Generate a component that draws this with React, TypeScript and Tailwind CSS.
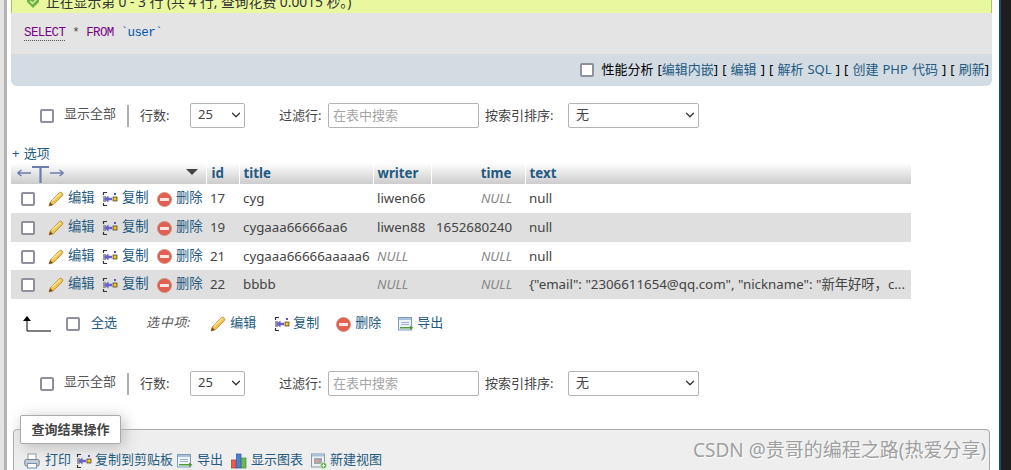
import { ChevronDown } from 'lucide-react'

const FONT = '"Noto Sans","Noto Sans CJK SC",sans-serif'

function PencilIcon() {
  return (
    <svg width="16" height="16" viewBox="0 0 16 16" className="shrink-0">
      <path d="M1 15 L2.5 10.5 L11.5 1.6 Q12.6 .8 13.8 1.7 L14.6 2.6 Q15.2 3.8 14.3 4.7 L5.5 13.6 Z" fill="#f2c44e" stroke="#b9812a" strokeWidth=".8" />
      <path d="M4 10 L12.5 2.5" stroke="#fbe6a0" strokeWidth="1.4" />
      <path d="M1 15 L2.2 11.2 L4.9 13.9 Z" fill="#7a4a1c" />
    </svg>
  )
}

function CopyIcon() {
  return (
    <svg width="16" height="16" viewBox="0 0 16 16" className="shrink-0">
      <path d="M5 1.5 H1.5 V4 M1.5 12 V14.5 H5" fill="none" stroke="#333" strokeWidth="1.2" />
      <rect x="1" y="5" width="3" height="6" fill="#999" />
      <path d="M2 8 L6.5 4.5 V6.7 H10 V9.3 H6.5 V11.5 Z" fill="#6a5fd0" />
      <rect x="11" y="6" width="4" height="4" fill="#f5c518" stroke="#333" strokeWidth=".7" />
      <rect x="12" y="2" width="2" height="2" fill="#5b50c0" />
    </svg>
  )
}

function DeleteIcon() {
  return (
    <svg width="15" height="15" viewBox="0 0 15 15" className="shrink-0">
      <circle cx="7.5" cy="7.5" r="7" fill="#e2604f" stroke="#c9897f" strokeWidth=".8" />
      <rect x="3" y="6" width="9" height="3" fill="#f7e6e2" />
    </svg>
  )
}

function ExportIcon() {
  return (
    <svg width="16" height="16" viewBox="0 0 16 16" className="shrink-0">
      <rect x=".5" y="1.5" width="13" height="12.5" fill="#eef3fa" stroke="#7f9db9" />
      <rect x="1" y="2" width="12" height="2" fill="#a8c0dc" />
      <path d="M3 6.5 H11 M3 8.5 H11" stroke="#9db3cc" />
      <path d="M2 11 H12 V9.5 L15.5 11.7 L12 14 V12.5 H2 Z" fill="#4e9a3c" />
    </svg>
  )
}

function PrintIcon() {
  return (
    <svg width="16" height="16" viewBox="0 0 16 16" className="shrink-0">
      <rect x="4" y="1" width="8" height="6" fill="#fff" stroke="#8a97a6" />
      <rect x=".8" y="6.5" width="14.4" height="6.5" rx="1.5" fill="#c5ccd4" stroke="#77828e" />
      <rect x="3.5" y="10.5" width="9" height="4.5" fill="#fff" stroke="#6f8fb5" />
    </svg>
  )
}

function ChartIcon() {
  return (
    <svg width="16" height="16" viewBox="0 0 16 16" className="shrink-0">
      <rect x=".5" y="7" width="4.5" height="8" fill="#e2604f" stroke="#b03a2c" strokeWidth=".7" />
      <rect x="5.5" y="1" width="4.5" height="14" fill="#4f7fd0" stroke="#2a55a0" strokeWidth=".7" />
      <rect x="10.5" y="5" width="4.5" height="10" fill="#6fb55a" stroke="#3e8a2e" strokeWidth=".7" />
    </svg>
  )
}

function NewViewIcon() {
  return (
    <svg width="16" height="16" viewBox="0 0 16 16" className="shrink-0">
      <rect x=".5" y="1" width="13" height="13" fill="#eef1f4" stroke="#8a9aa8" />
      <rect x="1" y="1.5" width="12" height="2" fill="#a8c0dc" />
      <rect x="3" y="5" width="8" height="6" fill="#9aa5b5" />
      <circle cx="6" cy="8" r="2" fill="#d9a088" />
      <circle cx="12.5" cy="12.5" r="3.2" fill="#5cb04a" stroke="#fff" strokeWidth=".6" />
      <path d="M10.8 12.5 H14.2 M12.5 10.8 V14.2" stroke="#fff" strokeWidth="1.1" />
    </svg>
  )
}

function SuccessIcon() {
  return (
    <svg width="12" height="12" viewBox="0 0 12 12" className="shrink-0 -mt-[10px]">
      <path d="M0 2 L6 0 L12 2 V6 L6 12 L0 6 Z" fill="#6db33f" />
      <path d="M3 5 L5.5 7.5 L9.5 3.5" fill="none" stroke="#d8f0b8" strokeWidth="1.4" />
    </svg>
  )
}

function Box() {
  return <input type="checkbox" className="block appearance-none shrink-0 w-[14px] h-[14px] border-2 border-[#8f8f9d] rounded-[2px] bg-white" />
}

function Dropdown({ value, width }: { value: string; width: string }) {
  return (
    <div className={`relative h-[25px] ${width}`}>
      <select className="appearance-none w-full h-full pl-[7px] pb-[2px] border border-[#b3b3b3] rounded-[2px] bg-white text-[#444] text-[13px]">
        <option>{value}</option>
      </select>
      <ChevronDown size={14} strokeWidth={2.2} className="absolute right-[2px] top-[5px] text-[#333] pointer-events-none" />
    </div>
  )
}

function Navigation() {
  return (
    <div className="flex items-center h-[25px] text-[13px] text-[#444]">
      <div className="ml-[29px]"><Box /></div>
      <span className="ml-[10px] w-[53px] -mt-[3px] text-[#555]">显示全部</span>
      <span className="ml-[10px] w-[2px] h-[22px] bg-[#b0b0b0]" />
      <span className="ml-[11px] w-[50px]">行数:</span>
      <Dropdown value="25" width="w-[55px]" />
      <span className="ml-[34px] w-[49px]">过滤行:</span>
      <input
        placeholder="在表中搜索"
        className="w-[151px] h-[25px] px-[4px] pb-[2px] border border-[#b3b3b3] rounded-[2px] bg-white text-[13px] placeholder:text-[#a5a5a5]"
      />
      <span className="ml-[6px] w-[83px]">按索引排序:</span>
      <Dropdown value="无" width="w-[131px]" />
    </div>
  )
}

function Action({ icon, label, gap = 'gap-[4px]', className = '' }: { icon: React.ReactNode; label: string; gap?: string; className?: string }) {
  return (
    <span className={`flex items-center ${gap} ${className} text-[#235a81]`}>
      {icon}
      <span className="-mt-[2px]">{label}</span>
    </span>
  )
}

const rows = [
  { id: 17, title: 'cyg', writer: 'liwen66', time: null, text: 'null', h: 'h-[29px]' },
  { id: 19, title: 'cygaaa66666aa6', writer: 'liwen88', time: '1652680240', text: 'null', h: 'h-[29px]' },
  { id: 21, title: 'cygaaa66666aaaaa6', writer: null, time: null, text: 'null', h: 'h-[28px]' },
  { id: 22, title: 'bbbb', writer: null, time: null, text: '{"email": "2306611654@qq.com", "nickname": "新年好呀，c...', h: 'h-[29px]' },
]

const headCell = 'border-l border-white font-bold text-[#235a81] bg-gradient-to-b from-white to-[#cccccc]'

function Null() {
  return <span className="italic text-[#888]">NULL</span>
}

function ResultTable() {
  return (
    <table className="table-fixed w-[900px] border-collapse text-[13.3px] text-[#444]">
      <colgroup>
        <col className="w-[195px]" />
        <col className="w-[33px]" />
        <col className="w-[134px]" />
        <col className="w-[58px]" />
        <col className="w-[94px]" />
        <col className="w-[386px]" />
      </colgroup>
      <thead>
        <tr className="h-[21px]">
          <th className="p-0 bg-gradient-to-b from-white to-[#cccccc]">
            <div className="flex items-center justify-between pl-[6px] pr-[8px]">
              <svg width="47" height="20" viewBox="0 0 47 20">
                <path d="M0.5 9 H14 M0.5 9 L4.5 6 M0.5 9 L4.5 12 M33 9 H46.5 M46.5 9 L42.5 6 M46.5 9 L42.5 12" fill="none" stroke="#6a7bb0" strokeWidth="1.4" />
                <path d="M15 3 H32 M23.5 3 V19" fill="none" stroke="#6a7bb0" strokeWidth="2.2" />
              </svg>
              <svg width="12" height="6" viewBox="0 0 12 6" className="-mt-[3px]">
                <path d="M0 0 H12 L6 6 Z" fill="#444" />
              </svg>
            </div>
          </th>
          <th className={`${headCell} pl-[5px] text-left`}>id</th>
          <th className={`${headCell} px-[4px] text-left`}>title</th>
          <th className={`${headCell} px-[4px] text-left`}>writer</th>
          <th className={`${headCell} pr-[13px] text-right`}>time</th>
          <th className={`${headCell} px-[4px] text-left`}>text</th>
        </tr>
      </thead>
      <tbody>
        {rows.map((r, i) => (
          <tr key={r.id} className={`${r.h} ${i % 2 === 1 ? 'bg-[#dfdfdf]' : 'bg-white'}`}>
            <td className="p-0">
              <div className="flex items-center pl-[10px] pt-[1px]">
                <Box />
                <div className="ml-[13px] w-[54px]"><Action icon={<PencilIcon />} label="编辑" /></div>
                <div className="w-[55px]"><Action icon={<CopyIcon />} label="复制" /></div>
                <Action icon={<DeleteIcon />} label="删除" />
              </div>
            </td>
            <td className="px-[4px] pt-[1px]">{r.id}</td>
            <td className="px-[4px] pt-[1px] whitespace-nowrap">{r.title}</td>
            <td className="px-[4px] pt-[1px]">{r.writer ?? <Null />}</td>
            <td className="pr-[13px] pt-[1px] text-right">{r.time ?? <Null />}</td>
            <td className="px-[4px] pt-[1px] whitespace-nowrap overflow-hidden">{r.text}</td>
          </tr>
        ))}
      </tbody>
    </table>
  )
}

export default function App() {
  return (
    <div className="relative flex w-[1011px] h-[470px] overflow-hidden bg-white" style={{ fontFamily: FONT }}>
      {/* left scroll gutter */}
      <div className="w-[4px] bg-[#e4e4e4]" />
      <div className="w-[3px] bg-[#b4b4b4]" />
      <div className="w-[985px] pl-[4px]">
        {/* message + query */}
        <div className="flex items-center gap-[7px] h-[13px] pl-[15px] bg-[#e9f89e] border-x border-[#a6c85a] overflow-hidden text-[13.8px] text-[#333]">
          <SuccessIcon />
          <span className="-mt-[8px] whitespace-nowrap">正在显示第 0 - 3 行 (共 4 行, 查询花费 0.0015 秒。)</span>
        </div>
        <div className="h-[41px] pl-[13px] pt-[12px] bg-[#e4e4e4] text-[12.5px] tracking-[-0.6px] leading-[16px]" style={{ fontFamily: '"Liberation Mono",monospace' }}>
          <span className="text-[#770088] border-b border-dotted border-[#555]">SELECT</span>
          <span className="text-[#444]"> * </span>
          <span className="text-[#770088]">FROM</span>
          <span className="text-[#0055aa]"> `user`</span>
        </div>
        <div className="flex items-center justify-end gap-[7px] h-[32px] pr-[3px] bg-[#d3dce3] rounded-b-[6px] text-[13px] text-[#000]">
          <Box />
          <span className="-mt-[1px] [word-spacing:0.7px]">
            性能分析 [<span className="text-[#235a81]">编辑内嵌</span>] [ <span className="text-[#235a81]">编辑</span> ] [ <span className="text-[#235a81]">解析 SQL</span> ] [ <span className="text-[#235a81]">创建 PHP 代码</span> ] [ <span className="text-[#235a81]">刷新</span>]
          </span>
        </div>

        <div className="mt-[17px]"><Navigation /></div>

        <div className="mt-[16px] ml-[1px] h-[19px] text-[13px] leading-[19px] text-[#235a81] [word-spacing:1px]">+ 选项</div>
        <ResultTable />

        {/* with selected */}
        <div className="flex items-center h-[48px] pt-[2px] text-[13px] text-[#444]">
          <svg width="28" height="16" viewBox="0 0 28 16" className="ml-[12px] shrink-0">
            <path d="M4 4 V15 H28" fill="none" stroke="#000" strokeWidth="1" />
            <path d="M0 5 L4 0 L8 5 Z" fill="#000" />
          </svg>
          <div className="ml-[15px]"><Box /></div>
          <span className="ml-[11px] text-[#235a81] -mt-[2px]">全选</span>
          <span className="ml-[29px] italic tracking-[0.7px] -mt-[2px] text-[#555]">选中项:</span>
          <div className="ml-[19px] w-[64px]"><Action icon={<PencilIcon />} label="编辑" /></div>
          <div className="w-[62px]"><Action icon={<CopyIcon />} label="复制" gap="gap-[3px]" /></div>
          <div className="w-[62px]"><Action icon={<DeleteIcon />} label="删除" /></div>
          <Action icon={<ExportIcon />} label="导出" gap="gap-[3px]" />
        </div>

        <div className="mt-[24px]"><Navigation /></div>

        {/* query results operations */}
        <fieldset className="mt-[19px] ml-[2px] w-[977px] h-[80px] border border-[#aaaaaa] rounded-t-[4px] bg-[#eeeeee] px-[10px]">
          <legend className="ml-[-4px] w-[101px] h-[29px] flex items-center justify-center bg-white border border-[#aaaaaa] rounded-[2px] shadow-[3px_3px_15px_#bbbbbb] text-[13px] font-bold text-[#444]">
            查询结果操作
          </legend>
          <div className="flex items-center mt-[8px] text-[13px] whitespace-nowrap">
            <Action icon={<PrintIcon />} label="打印" gap="gap-[5px]" />
            <Action icon={<CopyIcon />} label="复制到剪贴板" gap="gap-[3px]" className="ml-[5px]" />
            <Action icon={<ExportIcon />} label="导出" className="ml-[4px]" />
            <Action icon={<ChartIcon />} label="显示图表" className="ml-[8px]" />
            <Action icon={<NewViewIcon />} label="新建视图" gap="gap-[3px]" className="ml-[8px]" />
          </div>
        </fieldset>
      </div>
      <div className="w-[7px] bg-white" />
      <div className="w-[2px] bg-[#1c4a78]" />
      <div className="flex-1 bg-[#1e1e1e]" />

      {/* watermark */}
      <div className="absolute left-[693px] top-[438px] text-[19px] leading-[24px] whitespace-nowrap text-[#a0a0a0] [text-shadow:1px_1px_1px_#ffffff]">
        CSDN @贵哥的编程之路(热爱分享)
      </div>
    </div>
  )
}
